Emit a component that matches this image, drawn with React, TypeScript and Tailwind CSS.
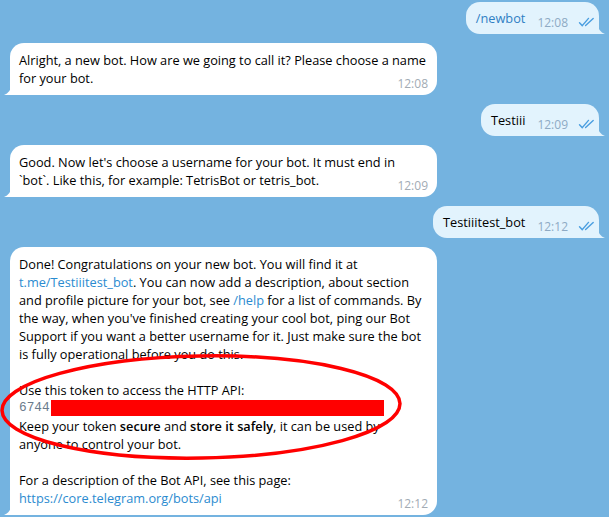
import React from 'react';

const Checks: React.FC = () => (
  <svg width="17" height="10" viewBox="0 0 17 10" fill="none" stroke="#4a9ee0" strokeWidth="1.4" strokeLinecap="round">
    <path d="M1.5 5.8 L4.2 8.6 L10.5 1.4" />
    <path d="M7.6 8.6 L15.2 1.4" />
  </svg>
);

const InTail: React.FC = () => (
  <svg className="absolute left-[-6px] bottom-0" width="7" height="10" viewBox="0 0 7 10">
    <path d="M7 0 C7 5 4.5 8.2 0 10 L7 10 Z" fill="#ffffff" />
  </svg>
);

const OutTail: React.FC = () => (
  <svg className="absolute right-[-6px] bottom-0" width="7" height="10" viewBox="0 0 7 10">
    <path d="M0 0 C0 5 2.5 8.2 7 10 L0 10 Z" fill="#e2f3fd" />
  </svg>
);

const Outgoing: React.FC<{ time: string; accent?: boolean; children: React.ReactNode }> = ({ time, accent, children }) => (
  <div className="flex justify-end pr-[10px]">
    <div className="relative flex items-end h-[32px] pl-[10px] pr-[4px] pt-[7px] pb-[7px] bg-[#e2f3fd] rounded-[14px] rounded-br-none whitespace-nowrap">
      <span className={`leading-[18px] ${accent ? 'text-[#2f7fc4]' : 'text-black'}`}>{children}</span>
      <span className="relative top-[3px] ml-[12px] text-[12px] leading-[14px] text-[#8eaac4]">{time}</span>
      <span className="relative top-[1px] ml-[10px] mb-[1px]">
        <Checks />
      </span>
      <OutTail />
    </div>
  </div>
);

const Incoming: React.FC<{ time: string; children: React.ReactNode }> = ({ time, children }) => (
  <div className="flex pl-[10px]">
    <div className="relative w-[427px] px-[9px] py-[8px] bg-white rounded-[14px] rounded-bl-none text-black leading-[18px] whitespace-nowrap">
      {children}
      <span className="absolute right-[9px] bottom-[4px] text-[12px] leading-[14px] text-[#a2abb4]">{time}</span>
      <InTail />
    </div>
  </div>
);

const Link: React.FC<{ children: React.ReactNode }> = ({ children }) => (
  <span className="text-[#2b8bd0]">{children}</span>
);

export default function App() {
  return (
    <div
      className="relative w-[609px] h-[517px] overflow-hidden bg-[#74b3e0] text-[12.75px]"
      style={{ fontFamily: '"Open Sans", "Noto Sans", sans-serif' }}
    >
      <div className="flex flex-col gap-[9px] pt-[2px]">
        <Outgoing time="12:08" accent>/newbot</Outgoing>

        <Incoming time="12:08">
          <div>Alright, a new bot. How are we going to call it? Please choose a name</div>
          <div>for your bot.</div>
        </Incoming>

        <Outgoing time="12:09">Testiii</Outgoing>

        <Incoming time="12:09">
          <div>Good. Now let's choose a username for your bot. It must end in</div>
          <div>`bot`. Like this, for example: TetrisBot or tetris_bot.</div>
        </Incoming>

        <Outgoing time="12:12">Testiiitest_bot</Outgoing>

        <Incoming time="12:12">
          <div>Done! Congratulations on your new bot. You will find it at</div>
          <div>
            <Link>t.me/Testiiitest_bot</Link>. You can now add a description, about section
          </div>
          <div>
            and profile picture for your bot, see <Link>/help</Link> for a list of commands. By
          </div>
          <div>the way, when you've finished creating your cool bot, ping our Bot</div>
          <div>Support if you want a better username for it. Just make sure the bot</div>
          <div>is fully operational before you do this.</div>
          <div className="h-[18px]" />
          <div>Use this token to access the HTTP API:</div>
          <div className="flex items-center h-[18px]">
            <span className="text-[#6a7b8c]" style={{ fontFamily: '"Liberation Mono", monospace' }}>
              6744
            </span>
            <span className="ml-[1px] w-[333px] h-[16px] bg-[#ff0000]" />
          </div>
          <div>
            Keep your token <span className="font-semibold">secure</span> and{' '}
            <span className="font-semibold">store it safely</span>, it can be used by
          </div>
          <div>anyone to control your bot.</div>
          <div className="h-[18px]" />
          <div>For a description of the Bot API, see this page:</div>
          <div>
            <Link>https://core.telegram.org/bots/api</Link>
          </div>
        </Incoming>
      </div>

      <svg className="absolute left-0 top-0 pointer-events-none" width="609" height="517" viewBox="0 0 609 517">
        <ellipse cx="201" cy="407" rx="199" ry="51" fill="none" stroke="#ff0000" strokeWidth="3.5" transform="rotate(-1 201 407)" />
      </svg>
    </div>
  );
}
